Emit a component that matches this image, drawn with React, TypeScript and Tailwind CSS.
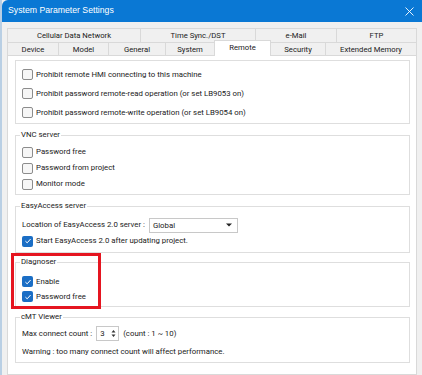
import React from "react";

const titleFont = { fontFamily: '"Liberation Sans", Arial, sans-serif' };
const bodyFont = { fontFamily: 'Roboto, "Liberation Sans", Arial, sans-serif' };

const Check = ({ checked, label }: { checked?: boolean; label: string }) => {
  return (
    <div className="flex items-center h-full">
      {checked ? (
        <div className="w-[11px] h-[11px] rounded-[2px] bg-[#1b6ec5] flex items-center justify-center">
          <svg width="8" height="8" viewBox="0 0 8 8">
            <path d="M1.4 4.1 L3.2 5.8 L6.6 2" stroke="white" strokeWidth="1" fill="none" />
          </svg>
        </div>
      ) : (
        <div className="w-[11px] h-[11px] rounded-[2px] border border-[#8c8c8c] bg-[#f6f6f6]" />
      )}
      <span className="ml-[3px] text-[7.8px] text-[#1a1a1a]">{label}</span>
    </div>
  );
};

const Group = ({ title, children, className }: { title?: string; children: React.ReactNode; className?: string }) => {
  return (
    <fieldset className={"border border-[#dedede] px-[6px] " + (className ?? "")}>
      {title && <legend className="-ml-[2px] px-[1px] text-[7.8px] text-[#1a1a1a] leading-[10px]">{title}</legend>}
      {children}
    </fieldset>
  );
};

const topTabs = [
  { name: "Cellular Data Network", w: "w-[134px]" },
  { name: "Time Sync./DST", w: "w-[116px]" },
  { name: "e-Mail", w: "w-[82px]" },
  { name: "FTP", w: "flex-1" },
];

const bottomTabs = [
  { name: "Device", w: "w-[52px]" },
  { name: "Model", w: "w-[51px]" },
  { name: "General", w: "w-[58px]" },
  { name: "System", w: "w-[50px]" },
  { name: "Remote", w: "w-[57px]", active: true },
  { name: "Security", w: "w-[56px]" },
  { name: "Extended Memory", w: "flex-1" },
];

export default function App() {
  return (
    <div className="w-[422px] h-[375px] overflow-hidden bg-[#f0f0f0] flex flex-col border-l-2 border-[#b9cfe4]" style={bodyFont}>
      <div className="h-[22px] shrink-0 bg-[#0a78d4] rounded-tl-[6px] flex items-center justify-between pl-[6px] pr-[8px]">
        <span className="text-white text-[8.7px]" style={titleFont}>System Parameter Settings</span>
        <svg width="9" height="9" viewBox="0 0 9 9">
          <path d="M0.5 0.5 L8.5 8.5 M8.5 0.5 L0.5 8.5" stroke="white" strokeWidth="0.9" />
        </svg>
      </div>
      <div className="flex-1 flex flex-col pl-[5px] pr-[5px] pt-[6px] min-h-0">
        <div className="flex h-[14px] shrink-0">
          {topTabs.map((t) => (
            <div
              key={t.name}
              className={t.w + " border border-b-0 border-[#d9d9d9] -ml-px first:ml-0 bg-[#f0f0f0] text-[7.7px] leading-[13px] text-center text-[#1a1a1a]"}
            >
              {t.name}
            </div>
          ))}
        </div>
        <div className="flex h-[13px] items-end shrink-0">
          {bottomTabs.map((t) =>
            t.active ? (
              <div
                key={t.name}
                className={t.w + " h-[16px] bg-white border border-b-0 border-[#d9d9d9] -ml-px text-[7.7px] leading-[13px] text-center text-[#1a1a1a] relative z-10 -mb-px"}
              >
                {t.name}
              </div>
            ) : (
              <div
                key={t.name}
                className={t.w + " h-[13px] border border-b-0 border-[#d9d9d9] -ml-px first:ml-0 text-[7.7px] leading-[13px] text-center text-[#1a1a1a]"}
              >
                {t.name}
              </div>
            )
          )}
        </div>
        <div className="flex-1 bg-white border border-[#d9d9d9] pl-[7px] pr-[6px] pt-[4px] flex flex-col">
          <Group className="pt-[4px] pb-[1px]">
            <div className="h-[19px]"><Check label="Prohibit remote HMI connecting to this machine" /></div>
            <div className="h-[19px]"><Check label="Prohibit password remote-read operation (or set LB9053 on)" /></div>
            <div className="h-[19px]"><Check label="Prohibit password remote-write operation (or set LB9054 on)" /></div>
          </Group>
          <Group title="VNC server" className="mt-[6px] pt-[4px] pb-[2px]">
            <div className="h-[16px]"><Check label="Password free" /></div>
            <div className="h-[16px]"><Check label="Password from project" /></div>
            <div className="h-[16px]"><Check label="Monitor mode" /></div>
          </Group>
          <Group title="EasyAccess server" className="mt-[6px] pt-[6px] pb-[3px]">
            <div className="flex items-center h-[16px]">
              <span className="text-[7.8px] text-[#1a1a1a]">Location of EasyAccess 2.0 server :</span>
              <div className="ml-[4px] w-[89px] h-[15px] border border-[#c8c8c8] bg-white flex items-center justify-between pl-[3px] pr-[5px]">
                <span className="text-[7.8px] text-[#1a1a1a] leading-[13px]">Global</span>
                <svg width="6" height="4" viewBox="0 0 6 4"><path d="M0 0.5 L6 0.5 L3 3.5 Z" fill="#222" /></svg>
              </div>
            </div>
            <div className="h-[16px]"><Check checked label="Start EasyAccess 2.0 after updating project." /></div>
          </Group>
          <div className="relative mt-[4px]">
            <Group title="Diagnoser" className="pt-[7px] pb-[2px]">
              <div className="h-[15px]"><Check checked label="Enable" /></div>
              <div className="h-[15px]"><Check checked label="Password free" /></div>
            </Group>
            <div className="absolute left-[-4px] top-[-4px] w-[90px] h-[56px] border-[3px] border-[#e51520]" />
          </div>
          <Group title="cMT Viewer" className="mt-[5px] pt-[3px] pb-[1px]">
            <div className="flex items-center h-[17px]">
              <span className="text-[7.8px] text-[#1a1a1a]">Max connect count :</span>
              <div className="ml-[4px] w-[23px] h-[15px] border border-[#c8c8c8] bg-white flex items-center justify-between pl-[3px] pr-[2px]">
                <span className="text-[7.8px] leading-[13px] text-[#1a1a1a]">3</span>
                <svg width="5" height="9" viewBox="0 0 5 9">
                  <path d="M0.5 3.5 L2.5 1 L4.5 3.5 Z M0.5 5.5 L2.5 8 L4.5 5.5 Z" fill="#333" />
                </svg>
              </div>
              <span className="ml-[4px] text-[7.8px] text-[#1a1a1a]">(count : 1 ~ 10)</span>
            </div>
            <div className="h-[19px] flex items-center text-[7.8px] text-[#1a1a1a]">
              Warning : too many connect count will affect performance.
            </div>
          </Group>
        </div>
      </div>
    </div>
  );
}
